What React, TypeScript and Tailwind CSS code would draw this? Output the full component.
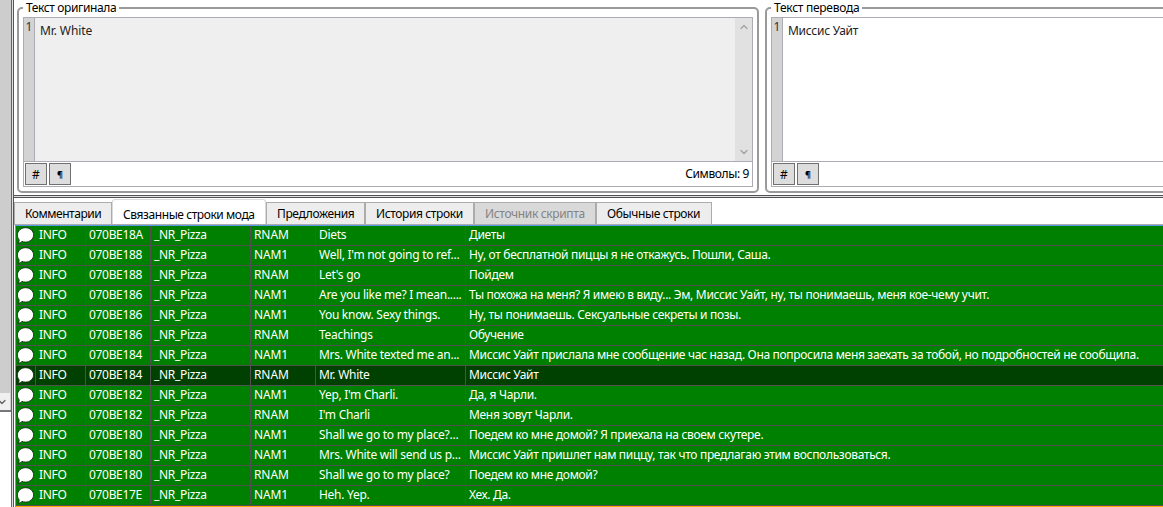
import React from "react";
import { ChevronDown, ChevronUp } from "lucide-react";
import clsx from "clsx";

const tabs = [
  { label: "Комментарии", box: "w-[98px] pl-[10px]", text: "tracking-[-0.45px]" },
  { label: "Связанные строки мода", box: "w-[154px] pl-[10px]", text: "tracking-[-0.43px]", active: true },
  { label: "Предложения", box: "w-[99px] pl-[10px]", text: "tracking-[-0.36px]" },
  { label: "История строки", box: "w-[109px] pl-[10px]", text: "tracking-[-0.38px]" },
  { label: "Источник скрипта", box: "w-[122px] pl-[10px]", text: "tracking-[-0.35px]", disabled: true },
  { label: "Обычные строки", box: "w-[116px] pl-[10px]", text: "tracking-[-0.38px]" },
];

const rows = [
  ["070BE18A", "RNAM", "Diets", "Диеты"],
  ["070BE188", "NAM1", "Well, I'm not going to ref...", "Ну, от бесплатной пиццы я не откажусь. Пошли, Саша."],
  ["070BE188", "RNAM", "Let's go", "Пойдем"],
  ["070BE186", "NAM1", "Are you like me? I mean.....", "Ты похожа на меня? Я имею в виду... Эм, Миссис Уайт, ну, ты понимаешь, меня кое-чему учит."],
  ["070BE186", "NAM1", "You know. Sexy things.", "Ну, ты понимаешь. Сексуальные секреты и позы."],
  ["070BE186", "RNAM", "Teachings", "Обучение"],
  ["070BE184", "NAM1", "Mrs. White texted me an...", "Миссис Уайт прислала мне сообщение час назад. Она попросила меня заехать за тобой, но подробностей не сообщила."],
  ["070BE184", "RNAM", "Mr. White", "Миссис Уайт"],
  ["070BE182", "NAM1", "Yep, I'm Charli.", "Да, я Чарли."],
  ["070BE182", "RNAM", "I'm Charli", "Меня зовут Чарли."],
  ["070BE180", "NAM1", "Shall we go to my place?...", "Поедем ко мне домой? Я приехала на своем скутере."],
  ["070BE180", "NAM1", "Mrs. White will send us p...", "Миссис Уайт пришлет нам пиццу, так что предлагаю этим воспользоваться."],
  ["070BE180", "RNAM", "Shall we go to my place?", "Поедем ко мне домой?"],
  ["070BE17E", "NAM1", "Heh. Yep.", "Хех. Да."],
];

const SELECTED_ROW = 7;

const SpeechBubble = () => (
  <svg width="19" height="19" viewBox="0 0 19 19" className="block">
    <path
      d="M9.5 1.7c4.500 0 8.100 3.200 8.100 7.200s-3.600 7.200-8.100 7.200c-1.300 0-2.500-.3-3.500-.7-.9.9-2.200 1.600-4.100 1.700.9-.9 1.300-2 1.300-3.200C2.100 12.600 1.400 10.800 1.400 8.900c0-4 3.600-7.200 8.100-7.200z"
      fill="#fff"
      stroke="#123012"
      strokeWidth="0.9"
    />
  </svg>
);

const ToolButton = ({ children, className }: { children: React.ReactNode; className: string }) => (
  <button className={clsx("w-[22px] h-[22px] border border-[#707070] bg-[#dddddd] leading-[19px] text-black", className)}>
    {children}
  </button>
);

type EditorProps = {
  title: string;
  text: string;
  className: string;
  titleClass: string;
  textClass: string;
  readOnly?: boolean;
};

const Editor = ({ title, text, className, titleClass, textClass, readOnly }: EditorProps) => (
  <fieldset
    className={clsx(
      "h-[193px] shrink-0 min-w-0 rounded-[5px] border-2 border-[#9a9a9a] px-1 pb-1 flex flex-col",
      className
    )}
  >
    <legend className={clsx("h-[15px] leading-[15px] px-[3px] whitespace-nowrap", titleClass)}>{title}</legend>
    <div className="mt-[2px] h-[170px] border border-[#abadb3] flex flex-col">
      <div className={clsx("h-[143px] flex", readOnly ? "bg-[#efefef]" : "bg-white")}>
        <div className="w-[11px] bg-[#d3d3d3] border-r border-[#abadb3] text-center leading-[17px] text-[#333]">1</div>
        <div className={clsx("flex-1 pl-[5px] pt-[4px] leading-[17px] text-[#222]", textClass)}>{text}</div>
        {readOnly && (
          <div className="w-[17px] bg-[#e1e1e1] flex flex-col items-center justify-between py-[3px] text-[#a0a0a0]">
            <ChevronUp size={12} strokeWidth={2.5} />
            <ChevronDown size={12} strokeWidth={2.5} />
          </div>
        )}
      </div>
      <div className="flex-1 border-t border-[#abadb3] bg-white flex items-center pl-px gap-[2px]">
        <ToolButton className="text-[12px]">#</ToolButton>
        <ToolButton className="text-[9px] font-bold">¶</ToolButton>
        {readOnly && <span className="ml-auto pr-[3px] tracking-[-0.38px]">Символы: 9</span>}
      </div>
    </div>
  </fieldset>
);

const App = () => {
  return (
    <div className="w-[1163px] h-[507px] overflow-hidden flex bg-white text-black text-[12px] font-['Noto_Sans','Open_Sans',sans-serif]">
      {/* Edge of the left pane */}
      <div className="w-[12px] shrink-0 border-r border-[#66666a]">
        <div className="h-[412px] bg-[#cdcdcd] border-b-2 border-[#77777b] flex flex-col justify-end">
          <div className="h-[17px] mr-px bg-[#f0f0f0] overflow-hidden flex items-center">
            <ChevronDown size={12} strokeWidth={2.5} className="-ml-[4px] shrink-0 text-[#606060]" />
          </div>
        </div>
      </div>
      <div className="w-[2px] shrink-0 bg-[#e0e0e0] border-r border-[#55555a]" />

      <div className="flex-1 min-w-0 flex flex-col">
        <div className="h-[195px] shrink-0 flex pl-[3px] gap-[6px] overflow-hidden">
          <Editor
            title="Текст оригинала"
            text="Mr. White"
            className="w-[742px]"
            titleClass="tracking-[-0.38px]"
            textClass="tracking-[-0.1px]"
            readOnly
          />
          <Editor
            title="Текст перевода"
            text="Миссис Уайт"
            className="w-[410px]"
            titleClass="tracking-[-0.27px]"
            textClass="tracking-[-0.27px]"
          />
        </div>
        <div className="h-[3px] shrink-0 border-y border-[#505055] bg-[#e0e0e0]" />

        {/* Tabs */}
        <div className="h-[27px] shrink-0 flex items-end border-b border-[#acacac]">
          {tabs.map((tab) => (
            <div
              key={tab.label}
              className={clsx(
                "shrink-0 whitespace-nowrap border border-b-0",
                tab.box,
                tab.text,
                tab.active
                  ? "h-[25px] bg-white border-[#d9d9d9] rounded-t-[3px] leading-[30px]"
                  : "h-[22px] border-[#acacac] leading-[21px]",
                !tab.active && (tab.disabled ? "bg-[#d9d9d9] text-[#838383]" : "bg-[#ededed]")
              )}
            >
              {tab.label}
            </div>
          ))}
        </div>

        {/* Linked strings */}
        <div className="flex-1 border-t border-l border-[#569de5] ml-px text-white whitespace-nowrap tracking-[-0.32px]">
          {rows.map(([id, type, source, translation], i) => (
            <div
              key={i}
              className={clsx(
                "h-5 grid grid-cols-[20px_50px_65px_100px_65px_150px_1fr] leading-[18px] border-b border-[#505050]",
                i === SELECTED_ROW ? "bg-[#004000]" : "bg-[#008000]"
              )}
            >
              <div className="border-r border-[#505050]"><SpeechBubble /></div>
              <div className="border-r border-[#505050] pl-[3px]">INFO</div>
              <div className="border-r border-[#505050] pl-[3px]">{id}</div>
              <div className="border-r border-[#505050] pl-[3px]">_NR_Pizza</div>
              <div className="border-r border-[#505050] pl-[3px] tracking-[-0.1px]">{type}</div>
              <div className="border-r border-[#505050] pl-[3px] overflow-hidden tracking-[-0.28px]">{source}</div>
              <div className="pl-[3px] overflow-hidden">{translation}</div>
            </div>
          ))}
          <div className="h-5 bg-[#ffa500]" />
        </div>
      </div>
    </div>
  );
};

export default App;
